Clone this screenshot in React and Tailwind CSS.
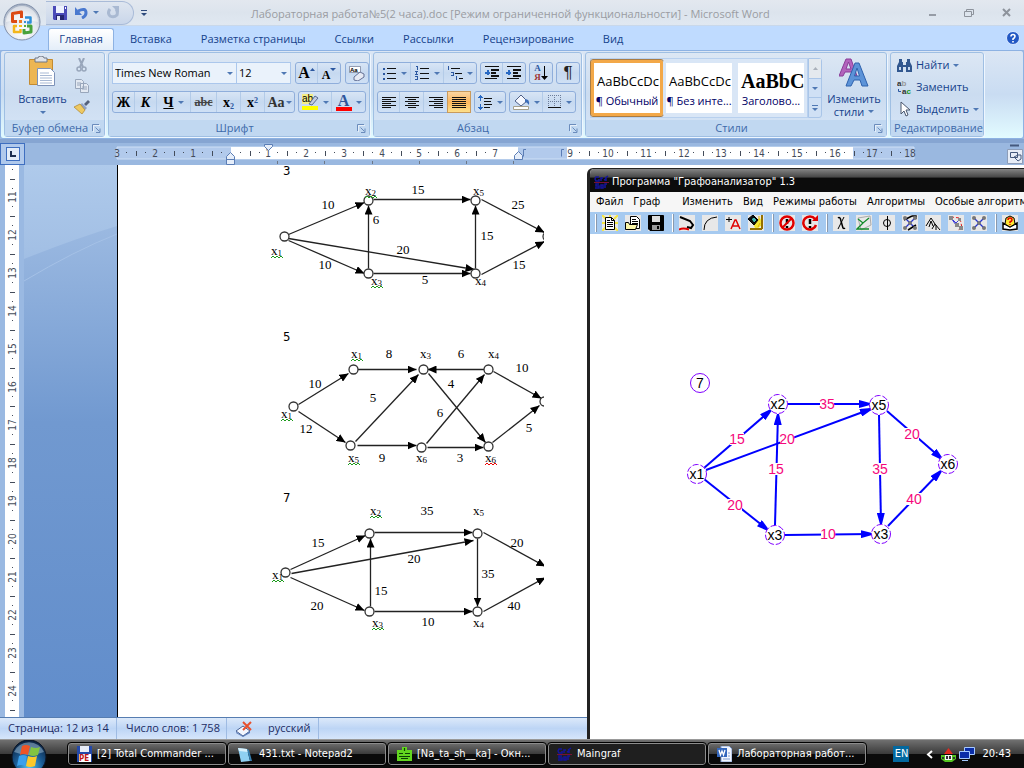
import { Fragment } from "react";

const TABS = ["Вставка", "Разметка страницы", "Ссылки", "Рассылки", "Рецензирование", "Вид"];

const TASKS = [
    {
        number: 3,
        viewBox: "271 177 273 154",
        height: "h-[154px]",
        nodes: [[284, 236], [368, 200], [475, 200], [368, 273], [475, 273], [547, 236]],
        edges: [
            [288, 234, 364, 202], [288, 238, 474, 269], [288, 240, 364, 273], [373, 199, 470, 199],
            [368, 268, 368, 205], [373, 273, 470, 273], [475, 268, 475, 205], [481, 199, 544, 232], [481, 274, 544, 241],
        ],
        names: [[271, 255, 1, "g"], [365, 195, 2, "g"], [473, 195, 5], [371, 285, 3, "g"], [475, 285, 4]],
        weights: [[328, 205, 10], [418, 190, 15], [376, 220, 6], [487, 236, 15], [518, 205, 25], [403, 250, 20], [325, 265, 10], [425, 280, 5], [519, 265, 15]],
    },
    {
        number: 5,
        viewBox: "271 343 273 149",
        height: "h-[149px]",
        nodes: [[293, 406], [353, 369], [423, 369], [488, 369], [350, 445], [421, 447], [488, 446], [544, 401]],
        edges: [
            [298, 404, 348, 373], [298, 411, 345, 442], [357, 369, 416, 369], [484, 369, 427, 369], [355, 441, 418, 374],
            [357, 445, 416, 445], [428, 373, 485, 442], [426, 443, 484, 374], [427, 447, 483, 447], [493, 371, 541, 398], [492, 442, 539, 405],
        ],
        names: [[351, 358, 1, "g"], [420, 358, 3], [488, 358, 4], [281, 418, 1, "g"], [348, 462, 5, "g"], [416, 462, 6], [485, 462, 6, "r"]],
        weights: [[389, 354, 8], [461, 354, 6], [522, 368, 10], [315, 384, 10], [373, 398, 5], [451, 384, 4], [306, 429, 12], [440, 413, 6], [382, 458, 9], [460, 458, 3], [529, 428, 5]],
    },
    {
        number: 7,
        viewBox: "271 504 273 130",
        height: "h-[130px]",
        nodes: [[285, 572], [369, 533], [477, 533], [369, 611], [477, 611]],
        edges: [
            [290, 569, 365, 535], [291, 573, 473, 540], [290, 577, 364, 610], [374, 532, 472, 532], [370, 606, 370, 538],
            [374, 611, 472, 611], [477, 538, 477, 606], [483, 532, 545, 566], [483, 611, 545, 577],
        ],
        names: [[370, 515, 2, "g"], [473, 515, 5], [272, 579, 1, "g"], [372, 627, 3, "g"], [473, 627, 4]],
        weights: [[427, 511, 35], [318, 543, 15], [414, 559, 20], [517, 543, 20], [488, 574, 35], [381, 591, 15], [317, 606, 20], [514, 606, 40], [428, 622, 10]],
    },
];

const GRAF_NODES = [[700, 383, "7"], [778, 404, "x2"], [879, 405, "x5"], [697, 474, "x1"], [775, 535, "x3"], [881, 534, "x3"], [948, 464, "x6"]];

const GRAF_EDGES = [
    [704, 468, 771, 410, 15, 737, 439],
    [706, 470, 871, 409, 20, 787, 439],
    [704, 479, 768, 530, 20, 735, 505],
    [775, 525, 778, 414, 15, 776, 469],
    [788, 404, 870, 404, 35, 827, 404],
    [879, 415, 881, 524, 35, 880, 469],
    [887, 411, 942, 459, 20, 912, 434],
    [785, 535, 872, 534, 10, 828, 534],
    [888, 526, 941, 471, 40, 914, 499],
];

function Caret({ className = "text-[#4f78b4]" }) {
    return (
        <svg className={ `shrink-0 w-[6px] h-[3px] ${ className }` } viewBox="0 0 6 3">
            <path d="M0 0h6L3 3z" fill="currentColor" />
        </svg>
    );
}

function Launcher() {
    return (
        <svg className="w-[9px] h-[9px]" viewBox="0 0 9 9" fill="none" stroke="#6b8cbc">
            <path d="M.5 7V.5H7M3.500 3.500l4 4M8 4.500v4H4" />
            <path d="M1.500 8V1.500H8" stroke="#fff" strokeOpacity=".6" />
        </svg>
    );
}

function RibbonGroup({ title, width, launcher, children }) {
    return (
        <section className={ `flex flex-col shrink-0 rounded-[3px] border border-[#9fbfe3] bg-linear-to-b from-[#dce7f4] via-[#cbdcf0] to-[#d6e5f7] shadow-[1px_1px_0_#eef6ff] ${ width }` }>
            <div className="flex-1 min-h-0">{ children }</div>
            <h2 className="flex h-4 items-center bg-[#c1d8f1] px-[3px] text-[11px] leading-4 text-[#3e6aaa]">
                <span className="flex-1 text-center whitespace-nowrap">{ title }</span>
                { launcher ? <button aria-label={ title }><Launcher /></button> : null }
            </h2>
        </section>
    );
}

function ButtonStrip({ children }) {
    return (
        <div className="flex h-[22px] rounded-[3px] border border-[#8faedb] bg-linear-to-b from-[#d8e5f5] via-[#c6d9f0] to-[#cfe0f5] divide-x divide-[#b3cbe8]">
            { children }
        </div>
    );
}

function Tool({ width = "w-[22px]", label, caret, active, children }) {
    return (
        <button
            aria-label={ label }
            className={ `flex h-full items-center justify-center gap-1 ${ width } ${ active ? "bg-linear-to-b from-[#fbd5a0] via-[#fbb65c] to-[#fde08a] outline outline-[#c99a5c]" : "" }` }
        >
            { children }
            { caret ? <Caret /> : null }
        </button>
    );
}

function Glyph({ d, stroke = "#111", extra }) {
    return (
        <svg className="shrink-0 w-4 h-4" viewBox="0 0 16 16" fill="none" stroke={ stroke } shapeRendering="crispEdges">
            <path d={ d } />
            { extra }
        </svg>
    );
}

function OfficeLogo() {
    return (
        <svg className="w-[38px] h-[38px]" viewBox="0 0 38 38">
            <defs>
                <radialGradient id="office" cx=".5" cy=".75" r=".7">
                    <stop offset="0" stopColor="#fff" />
                    <stop offset=".6" stopColor="#e3e7ee" />
                    <stop offset="1" stopColor="#a9b4c6" />
                </radialGradient>
            </defs>
            <circle cx="19" cy="19" r="18" fill="url(#office)" stroke="#8190aa" />
            <path d="M3 19a16 16 0 0 1 32 0q-16-5-32 0z" fill="#fff" opacity=".5" />
            <g fill="none" strokeLinejoin="round">
                <path d="M14 18.500h-4.500v-8l9-1.500v6" stroke="#dc4a14" strokeWidth="3" />
                <path d="M22 14.500h5.500v5H24" stroke="#2c8fd8" strokeWidth="2.500" />
                <path d="M14 23h-3v6h6.500v-3" stroke="#f3b61b" strokeWidth="2.500" />
                <path d="M21 26v4l7-1v-6h-4" stroke="#48a23c" strokeWidth="3" />
            </g>
            <path d="M16 17h3v3h-3z" fill="#ef7b20" />
            <path d="M21 18h2v2h-2z" fill="#3b8fd8" />
            <path d="M16 22h3v2h-3z" fill="#f4c01c" />
            <path d="M21 22h2v2h-2z" fill="#5bae3b" />
        </svg>
    );
}

function FloppyIcon({ className = "w-[14px] h-[14px]" }) {
    return (
        <svg className={ className } viewBox="0 0 14 14">
            <path d="M0 0h14v14H1l-1-1z" fill="#4a4ab8" />
            <path d="M3 0h8v7H3z" fill="#eef2ff" />
            <path d="M3 9h8v5H3z" fill="#25256f" />
            <path d="M4 10h3v4H4z" fill="#e4e8f8" />
            <path d="M12 1h1v2h-1z" fill="#fff" />
        </svg>
    );
}

function TitleBar() {
    return (
        <header className="flex h-[26px] shrink-0 items-center bg-linear-to-b from-[#e3e8ef] via-[#dce4ed] to-[#e0e8f1] border-b border-[#c9d8ea]">
            <div className="flex h-6 w-[88px] ml-[46px] items-center gap-2 rounded-r-full border-y border-r border-[#a9bbd8] bg-linear-to-b from-[#dfe6f0] to-[#c9d6ea] pl-[7px]">
                <button aria-label="Сохранить"><FloppyIcon /></button>
                <button aria-label="Отменить" className="flex items-center gap-[5px]">
                    <svg className="w-[13px] h-[13px]" viewBox="0 0 13 13" fill="none">
                        <path d="M3 5q8-4 8 2 0 3-4 5" stroke="#4a79cf" strokeWidth="3" />
                        <path d="M0 1v8h7z" fill="#4a79cf" />
                    </svg>
                    <Caret />
                </button>
                <button aria-label="Вернуть">
                    <svg className="w-3 h-[13px]" viewBox="0 0 12 13" fill="none">
                        <path d="M3 3q-3 4 0 7 4 2 7-1 1-3-1-6" stroke="#a9b9d2" strokeWidth="3" />
                        <path d="M5 0h7v7z" fill="#a9b9d2" />
                    </svg>
                </button>
            </div>
            <button aria-label="Настройка панели" className="ml-[7px] flex flex-col items-center gap-[2px]">
                <span className="h-px w-[6px] bg-[#2d4a7c]"></span>
                <Caret className="text-[#2d4a7c]" />
            </button>
            <h1 className="ml-[104px] flex-1 whitespace-nowrap pt-[2px] text-[11px] leading-5 text-[#9a9ca2]">
                Лабораторная работа№5(2 часа).doc [Режим ограниченной функциональности] - Microsoft Word
            </h1>
            <div className="flex items-center gap-7 pr-[13px] text-[#8d939c]">
                <button aria-label="Свернуть" className="mt-[5px] h-[2px] w-[7px] bg-[#969ca6]"></button>
                <button aria-label="Развернуть">
                    <svg className="w-[10px] h-2" viewBox="0 0 10 8" fill="none" stroke="currentColor">
                        <path d="M2.500 2V.5h7v5H8M.5 2.500h7v5h-7z" />
                    </svg>
                </button>
                <button aria-label="Закрыть">
                    <svg className="w-[9px] h-[9px]" viewBox="0 0 9 9" stroke="currentColor" strokeWidth="2">
                        <path d="M1 1l7 7M8 1L1 8" />
                    </svg>
                </button>
            </div>
        </header>
    );
}

function TabBar() {
    return (
        <nav className="flex h-6 shrink-0 items-center bg-[#bfdbff] text-[11px] text-[#15428b]">
            <button className="ml-[48px] mt-[2px] h-[22px] w-[66px] rounded-t-[3px] border-x border-t border-[#8db2e3] bg-linear-to-b from-white to-[#e4eef9]">Главная</button>
            <div className="ml-4 flex flex-1 gap-[29px] pt-[2px]">
                { TABS.map((tab) => <button key={ tab } className="whitespace-nowrap">{ tab }</button>) }
            </div>
            <button aria-label="Справка" className="mr-1">
                <svg className="w-[14px] h-[14px]" viewBox="0 0 14 14">
                    <circle cx="7" cy="7" r="6.500" fill="#2258c4" stroke="#dbe9ff" />
                    <path d="M5 5.500q0-2 2-2t2 1.700Q9 6.500 7 8v1M7 10v1.500" fill="none" stroke="#fff" strokeWidth="1.600" />
                </svg>
            </button>
        </nav>
    );
}

function ClipboardGroup() {
    return (
        <RibbonGroup title="Буфер обмена" width="w-[101px]" launcher>
            <div className="flex pl-3">
                <button className="mt-[3px] flex w-[51px] flex-col items-center text-[11px] leading-4 text-[#15428b]">
                    <svg className="w-[27px] h-8" viewBox="0 0 27 32">
                        <path d="M.5 3.500h23v25H.5z" fill="#edb653" stroke="#c38b32" />
                        <path d="M6 2h3q0-2 3-2t3 2h3v4H6z" fill="#dfe3ea" stroke="#6f7785" />
                        <path d="M8.500 12.500h13l4 4v13h-17z" fill="#fff" stroke="#7d92b8" />
                        <path d="M11 17h9M11 19.500h12M11 22h12M11 24.500h12M11 27h12" stroke="#a8b9d4" />
                    </svg>
                    <span className="mt-[3px]">Вставить</span>
                    <span className="mt-1"><Caret /></span>
                </button>
                <div className="mt-[5px] ml-[6px] flex flex-col gap-[7px]">
                    <button aria-label="Вырезать">
                        <svg className="block w-4 h-[14px]" viewBox="0 0 16 14" fill="none" stroke="#98a6bb" strokeWidth="1.500">
                            <path d="M5 0l4 9M10 0L6 9" strokeWidth="2" />
                            <circle cx="5" cy="11" r="2" />
                            <circle cx="10" cy="11" r="2" />
                        </svg>
                    </button>
                    <button aria-label="Копировать">
                        <svg className="block w-4 h-[14px]" viewBox="0 0 16 14" fill="#e3e9f2" stroke="#98a6bb">
                            <path d="M1.500 .5h6l2 2v7h-8zM6.500 4.500h6l2 2v7h-8z" />
                            <path d="M3 4h4M3 6h3M8 8h5M8 10h5" />
                        </svg>
                    </button>
                    <button aria-label="Формат по образцу">
                        <svg className="block w-4 h-[14px]" viewBox="0 0 16 14">
                            <path d="M10 4l4-4 2 2-4 4z" fill="#55617c" />
                            <path d="M8 3l5 5-2 2-5-5z" fill="#8fa2c8" />
                            <path d="M6 4l5 6-3 4-8-7z" fill="#eec963" stroke="#af8429" strokeWidth=".7" />
                        </svg>
                    </button>
                </div>
            </div>
        </RibbonGroup>
    );
}

function FontGroup() {
    return (
        <RibbonGroup title="Шрифт" width="w-[262px]" launcher>
            <div className="flex flex-col gap-[7px] px-[3px] pt-[9px] text-black">
                <div className="flex gap-1">
                    <div className="flex h-[22px] text-[11px]">
                        <label className="relative flex items-center">
                            <select aria-label="Шрифт" className="h-full w-[125px] appearance-none border border-[#abc7ec] bg-[#eaf2fb] px-[2px]"><option>Times New Roman</option></select>
                            <span className="pointer-events-none absolute right-1 flex"><Caret /></span>
                        </label>
                        <label className="relative flex items-center">
                            <select aria-label="Размер" className="h-full w-[54px] appearance-none border border-l-0 border-[#abc7ec] bg-[#eaf2fb] px-[2px]"><option>12</option></select>
                            <span className="pointer-events-none absolute right-1 flex"><Caret /></span>
                        </label>
                    </div>
                    <ButtonStrip>
                        <Tool label="Увеличить размер">
                            <span className="font-['Liberation_Serif',serif] text-[16px] font-bold">A</span>
                            <svg className="-ml-1 mb-2 w-[5px] h-[3px]" viewBox="0 0 5 3"><path d="M0 3h5L2.500 0z" fill="#2b57a0" /></svg>
                        </Tool>
                        <Tool label="Уменьшить размер">
                            <span className="pt-1 font-['Liberation_Serif',serif] text-[12px] font-bold">A</span>
                            <span className="-ml-1 mb-2 flex"><Caret className="text-[#2b57a0]" /></span>
                        </Tool>
                    </ButtonStrip>
                    <ButtonStrip>
                        <Tool label="Очистить формат">
                            <svg className="w-4 h-4" viewBox="0 0 16 16">
                                <path d="M.5 1.500h11v6H.5z" fill="#fff" stroke="#5a6784" strokeWidth=".6" />
                                <text x="1" y="7" fontSize="6" fontFamily="Liberation Sans, sans-serif" fontWeight="bold">Aa</text>
                                <path d="M5 12l6-5 4 2v3l-6 4-4-1z" fill="#e6eaf4" stroke="#647095" />
                            </svg>
                        </Tool>
                    </ButtonStrip>
                </div>
                <div className="flex gap-[3px] font-['Liberation_Serif',serif] text-[14px]">
                    <ButtonStrip>
                        <Tool><b>Ж</b></Tool>
                        <Tool><b><i>К</i></b></Tool>
                        <Tool width="w-[34px]" caret><b><u>Ч</u></b></Tool>
                        <Tool width="w-[26px]"><s className="text-[12px] font-bold text-[#444]">abc</s></Tool>
                        <Tool width="w-6"><span className="font-bold">x<sub className="text-[8px] text-[#2b57a0]">2</sub></span></Tool>
                        <Tool width="w-6"><span className="font-bold">x<sup className="text-[8px] text-[#2b57a0]">2</sup></span></Tool>
                        <Tool width="w-[29px]" caret><span className="-mr-[3px] font-bold text-[#333]">Aa</span></Tool>
                    </ButtonStrip>
                    <ButtonStrip>
                        <Tool width="w-[33px]" label="Цвет выделения" caret>
                            <svg className="w-[17px] h-4" viewBox="0 0 17 16">
                                <path d="M0 0h11v10H0z" fill="#f4ee86" />
                                <text x="0" y="8" fontSize="10" fontFamily="Liberation Sans, sans-serif">ab</text>
                                <path d="M7 10l6-8 3 2-6 7z" fill="#c3cde2" stroke="#596b92" />
                                <path d="M0 12h16v4H0z" fill="#ff0" />
                            </svg>
                        </Tool>
                        <Tool width="w-[33px]" label="Цвет текста" caret>
                            <span className="flex flex-col items-center text-[16px] leading-[13px] font-bold text-[#2f569c]">
                                A
                                <span className="h-1 w-4 bg-[#f00]"></span>
                            </span>
                        </Tool>
                    </ButtonStrip>
                </div>
            </div>
        </RibbonGroup>
    );
}

function ParagraphGroup() {
    return (
        <RibbonGroup title="Абзац" width="w-[209px]" launcher>
            <div className="flex flex-col gap-[7px] px-[3px] pt-[9px]">
                <div className="flex gap-[3px]">
                    <ButtonStrip>
                        <Tool width="w-[33px]" label="Маркеры" caret>
                            <Glyph d="M6 3.500h9M6 8.500h9M6 13.500h9" extra={ <path d="M2 3.500h2M2 8.500h2M2 13.500h2" stroke="#2b57a0" strokeWidth="2" /> } />
                        </Tool>
                        <Tool width="w-[33px]" label="Нумерация" caret>
                            <Glyph d="M6 3.500h9M6 8.500h9M6 13.500h9" extra={ <path d="M2 1.500h1.500v3M1 6.500h2.500L1.500 9.500h2M1 11.500h2.500v3H1" stroke="#2b57a0" /> } />
                        </Tool>
                        <Tool width="w-[32px]" label="Многоуровневый список" caret>
                            <Glyph d="M4 3.500h9M8 8.500h7M12 13.500h4" extra={ <path d="M1.500 1v4M4 7.500h2v3H4v-1M9.500 11v4" stroke="#2b57a0" /> } />
                        </Tool>
                    </ButtonStrip>
                    <ButtonStrip>
                        <Tool label="Уменьшить отступ">
                            <Glyph d="M1 1.500h14M1 13.500h12" extra={ <><path d="M7 4.500h8M7 7.500h5M7 10.500h8" stroke="#111" strokeWidth="2" /><path d="M6 7.500H1M3.500 5v5" stroke="#2869c4" strokeWidth="2" /></> } />
                        </Tool>
                        <Tool label="Увеличить отступ">
                            <Glyph d="M1 1.500h14M1 13.500h12" extra={ <><path d="M7 4.500h8M7 7.500h5M7 10.500h8" stroke="#111" strokeWidth="2" /><path d="M0 7.500h5M3 5v5" stroke="#2869c4" strokeWidth="2" /></> } />
                        </Tool>
                    </ButtonStrip>
                    <ButtonStrip>
                        <Tool label="Сортировка">
                            <span className="flex flex-col font-['Liberation_Serif',serif] text-[9px] leading-[9px] font-bold text-[#2b57a0]">А<span className="text-[#a03434]">Я</span></span>
                            <svg className="-ml-1 w-[7px] h-[14px]" viewBox="0 0 7 14"><path d="M3 0h1v10h3l-3.500 4L0 10h3z" /></svg>
                        </Tool>
                    </ButtonStrip>
                    <ButtonStrip><Tool><span className="font-['Liberation_Sans',sans-serif] text-[17px] text-[#222]">¶</span></Tool></ButtonStrip>
                </div>
                <div className="flex gap-[3px]">
                    <ButtonStrip>
                        <Tool label="По левому краю"><Glyph d="M1 3.500h14M1 5.500h9M1 7.500h14M1 9.500h9M1 11.500h14M1 13.500h9" /></Tool>
                        <Tool width="w-6" label="По центру"><Glyph d="M1 3.500h14M4 5.500h8M1 7.500h14M4 9.500h8M1 11.500h14M4 13.500h8" /></Tool>
                        <Tool width="w-6" label="По правому краю"><Glyph d="M1 3.500h14M6 5.500h9M1 7.500h14M6 9.500h9M1 11.500h14M6 13.500h9" /></Tool>
                        <Tool label="По ширине" active><Glyph d="M1 3.500h14M1 5.500h14M1 7.500h14M1 9.500h14M1 11.500h14M1 13.500h14" /></Tool>
                    </ButtonStrip>
                    <ButtonStrip>
                        <Tool width="w-[30px]" label="Интервал" caret>
                            <Glyph d="M7 4.500h8M7 7.500h7M7 10.500h8M7 13.500h6" extra={ <path d="M3.500 1v6M3.500 10v6M1 3.500h5M1 13.500h5M2 2.500h3M2 14.500h3" stroke="#2869c4" /> } />
                        </Tool>
                    </ButtonStrip>
                    <ButtonStrip>
                        <Tool width="w-[33px]" label="Заливка" caret>
                            <svg className="w-[17px] h-4" viewBox="0 0 17 16">
                                <path d="M8 1l6 6-6 5-6-5z" fill="#f5f8ff" stroke="#4e5f86" />
                                <path d="M12 5q5 0 4 6-2-3-4-3z" fill="#3c6db8" />
                                <path d="M.5 12.500h15v3H.5z" fill="#fff" stroke="#a5a08c" />
                            </svg>
                        </Tool>
                        <Tool width="w-[32px]" label="Границы" caret>
                            <Glyph d="M2 13.500h13" extra={ <path d="M2 1.500h13M2 7.500h13M2.500 1v12M8.500 1v12M14.500 1v12" stroke="#6d7e9c" strokeDasharray="1 1" /> } />
                        </Tool>
                    </ButtonStrip>
                </div>
            </div>
        </RibbonGroup>
    );
}

function StyleCard({ sample, name, sampleClass = "text-[13px]", active }) {
    return (
        <button className={ `flex h-[56px] w-[72px] flex-col items-center overflow-hidden rounded-[2px] border-3 bg-white py-1 whitespace-nowrap ${ active ? "border-[#f3a848] outline outline-[#a87b44]" : "border-[#d9e6f6]" }` }>
            <span className={ `h-7 w-full overflow-hidden pl-[3px] text-left leading-7 text-black ${ sampleClass }` }>{ sample }</span>
            <span className="text-[11px] leading-4 text-[#000066]">{ name }</span>
        </button>
    );
}

function StylesGroup() {
    return (
        <RibbonGroup title="Стили" width="w-[302px]" launcher>
            <div className="flex pt-[5px] pl-[4px]">
                <div className="flex items-center border border-[#b8d0ee] bg-[#d9e6f6] h-[60px]">
                    <StyleCard sample="AaBbCcDc" name="¶ Обычный" active />
                    <StyleCard sample="AaBbCcDc" name="¶ Без инте..." />
                    <StyleCard sample="AaBbC" name="Заголово..." sampleClass="font-['Liberation_Serif',serif] text-[20px] font-bold" />
                </div>
                <div className="flex w-[14px] flex-col divide-y divide-[#a9c5e8] rounded-r-[3px] border border-[#a9c5e8] bg-[#cfe0f5]">
                    <button aria-label="Вверх" className="flex flex-1 items-center justify-center bg-[#e4e9ee]">
                        <svg className="w-[5px] h-[3px]" viewBox="0 0 5 3"><path d="M0 3h5L2.500 0z" fill="#a9b0ba" /></svg>
                    </button>
                    <button aria-label="Вниз" className="flex flex-1 items-center justify-center"><Caret /></button>
                    <button aria-label="Все стили" className="flex flex-1 flex-col items-center justify-center gap-[2px]">
                        <span className="h-px w-[6px] bg-[#4f78b4]"></span>
                        <Caret />
                    </button>
                </div>
                <button className="flex flex-1 flex-col items-center text-[11px] leading-[13px] text-[#15428b]">
                    <svg className="w-[30px] h-[30px]" viewBox="0 0 30 30" strokeWidth="1">
                        <path d="M0 18L7 1h5l6 17h-4l-1-4H6l-2 4zM7 11h5L9.500 4z" fill="#b264bd" stroke="#8a3d98" />
                        <path d="M7 28L16 5h4l9 23h-6l-2-6h-6l-3 6zM15.500 18h5L18 10z" fill="#5c93d8" stroke="#2f62ad" />
                    </svg>
                    <span className="mt-1">Изменить</span>
                    <span className="flex items-center gap-1">стили <Caret /></span>
                </button>
            </div>
        </RibbonGroup>
    );
}

function EditingGroup() {
    return (
        <RibbonGroup title="Редактирование" width="w-[94px]">
            <div className="flex flex-col gap-[2px] pt-[2px] pl-[6px] text-[11px] text-[#15428b]">
                <button className="flex h-5 items-center gap-1">
                    <svg className="w-[15px] h-[13px]" viewBox="0 0 15 13" fill="#31578f">
                        <path d="M2 0h3v3h1v3h3V3h1V0h3v3l2 4v6H9V8H6v5H0V7l2-4z" />
                        <path d="M2 8h2v3H2zM11 8h2v3h-2z" fill="#c8daf2" />
                    </svg>
                    Найти <Caret />
                </button>
                <button className="flex h-5 items-center gap-1">
                    <svg className="w-[15px] h-4" viewBox="0 0 15 16" fontFamily="Liberation Sans, sans-serif" fontSize="8" fontWeight="bold">
                        <text x="0" y="7" fill="#333">a<tspan fill="#999">b</tspan></text>
                        <text x="5" y="15" fill="#333">a<tspan fill="#14961c">c</tspan></text>
                        <path d="M1.500 10v2.500H4" fill="none" stroke="#2b57a0" />
                    </svg>
                    Заменить
                </button>
                <button className="flex h-5 items-center gap-1">
                    <svg className="w-[15px] h-4" viewBox="0 0 15 16" fill="#fff" stroke="#49566d">
                        <path d="M4 1v12l3-3 2 5 2-1-2-5h4z" />
                    </svg>
                    Выделить <Caret />
                </button>
            </div>
        </RibbonGroup>
    );
}

function HorizontalRuler() {
    const marks = Array.from({ length: 22 }, (_, i) => i - 3);
    return (
        <div className="flex h-[22px] shrink-0 bg-[#9ab8e0]">
            <button aria-label="Табуляция" className="flex w-[25px] items-center justify-center border border-[#3f6fc0] bg-[#b0c9ec]">
                <span className="flex h-[14px] w-[14px] items-center justify-center border border-[#3f6fc0] bg-[#e3ecf8]">
                    <span className="h-[6px] w-[6px] border-b-2 border-l-2 border-[#1c2e50]"></span>
                </span>
            </button>
            <svg className="w-[960px] h-[22px]" viewBox="25 143 960 22">
                <path d="M117 147h797v12H117z" fill="#b2caec" stroke="#cfe0f6" />
                <path d="M231 147h287v12H231zM567 147h286v12H567z" fill="#fff" />
                <g fontFamily="DejaVu Sans Condensed, sans-serif" fontSize="10" fill="#444c5a" textAnchor="middle">
                    { marks.map((n) => {
                        const x = Math.round(230.5 + n * 37.75);
                        const covered = n === 8;
                        return (
                            <Fragment key={ n }>
                                { n !== 0 && !covered ? <text x={ x } y="157">{ Math.abs(n) }</text> : null }
                                { n < 18 && !covered && n !== 7 ? (
                                    <path d={ `M${ x + 9 } 152h1v1h-1zM${ x + 19 } 151h1v5h-1zM${ x + 28 } 152h1v1h-1z` } />
                                ) : null }
                            </Fragment>
                        );
                    }) }
                </g>
                <path d="M277.500 161v3M324.500 161v3M372.500 161v3M419.500 161v3M466.500 161v3M513.500 161v3" stroke="#6d7786" />
                <g fill="#e6eefa" stroke="#5b7db5">
                    <path d="M226.500 164.500v-8l4-4 4 4v8zM226.500 159.500h8" />
                    <path d="M264.500 144.500h8v2l-4 4-4-4z" />
                    <path d="M514.500 159.500v-4l4-4 4 4v4z" />
                    <path d="M526 149.500h-2.500v7M564 149.500h-2.500v7" fill="none" />
                </g>
            </svg>
            <button aria-label="Линейка" className="ml-auto mr-px flex w-4 items-center">
                <svg className="w-4 h-5" viewBox="0 0 16 20" fill="none" stroke="#45597d">
                    <path d="M3 1.500h9" strokeWidth="2" />
                    <path d="M.5 5.500h15v14H.5z" fill="#e7edf7" stroke="#8d9db8" />
                    <path d="M3.500 8.500h7v5h-7zM7 13l4 4 3-2v-4h-3z" />
                </svg>
            </button>
        </div>
    );
}

function VerticalRuler() {
    return (
        <svg className="w-6 h-[552px] shrink-0" viewBox="0 165 24 552">
            <path d="M0 165h24v552H0z" fill="#9ab9e2" />
            <path d="M5 165h14v552H5z" fill="#fff" />
            <g fill="#444c5a" fontFamily="DejaVu Sans Condensed, sans-serif" fontSize="10" textAnchor="middle">
                <path d="M12 169h1v1h-1zM10 179h5v1h-5zM12 188h1v1h-1z" />
                { Array.from({ length: 14 }, (_, i) => {
                    const y = 197 + i * 38;
                    return (
                        <Fragment key={ i }>
                            <text transform={ `translate(16 ${ y }) rotate(-90)` }>{ 11 + i }</text>
                            <path d={ `M12 ${ y + 9 }h1v1h-1zM10 ${ y + 19 }h5v1h-5zM12 ${ y + 28 }h1v1h-1z` } />
                        </Fragment>
                    );
                }) }
            </g>
        </svg>
    );
}

function TaskGraph({ task }) {
    const marker = `arrow${ task.number }`;
    return (
        <figure>
            <figcaption className="pl-3 font-['DejaVu_Sans_Condensed','DejaVu_Sans',sans-serif] text-[13px] leading-3">{ task.number }</figcaption>
            <svg className={ `block w-[273px] ${ task.height }` } viewBox={ task.viewBox } fontFamily="Liberation Serif, serif" fontSize="13">
                <defs>
                    <marker id={ marker } markerUnits="userSpaceOnUse" markerWidth="10" markerHeight="8" refX="9" refY="4" orient="auto">
                        <path d="M0 0l9 4-9 4z" />
                    </marker>
                </defs>
                { task.edges.map(([x1, y1, x2, y2]) => (
                    <line key={ `${ x1 }-${ y1 }-${ x2 }` } x1={ x1 + 0.5 } y1={ y1 + 0.5 } x2={ x2 + 0.5 } y2={ y2 + 0.5 } stroke="#222" strokeWidth="1.300" markerEnd={ `url(#${ marker })` } />
                )) }
                { task.nodes.map(([x, y]) => <circle key={ `${ x }-${ y }` } cx={ x + 0.5 } cy={ y + 0.5 } r="4.500" fill="#fff" stroke="#333" strokeWidth="1.300" />) }
                { task.weights.map(([x, y, value]) => <text key={ `${ x }-${ y }` } x={ x } y={ y + 4 } textAnchor="middle">{ value }</text>) }
                { task.names.map(([x, y, index, mark]) => (
                    <g key={ `${ x }-${ y }` }>
                        <text x={ x } y={ y }>x<tspan fontSize="9" dy="1">{ index }</tspan></text>
                        { mark ? <path d={ `M${ x } ${ y + 3 }l2-2 2 2 2-2 2 2 2-2 2 2` } fill="none" stroke={ mark === "r" ? "#e00" : "#1a9a1a" } /> : null }
                    </g>
                )) }
            </svg>
        </figure>
    );
}

function DocumentArea() {
    return (
        <main className="flex flex-1 min-h-0 overflow-hidden">
            <VerticalRuler />
            <svg className="h-full w-[93px] shrink-0" viewBox="24 165 93 552" preserveAspectRatio="none">
                <defs>
                    <linearGradient id="desk" x2="0" y2="1">
                        <stop offset="0" stopColor="#afcaeb" />
                        <stop offset=".15" stopColor="#a3c0e5" />
                        <stop offset=".6" stopColor="#6b97d2" />
                        <stop offset="1" stopColor="#618dcb" />
                    </linearGradient>
                    <linearGradient id="wave" x2="0" y2="1">
                        <stop offset="0" stopColor="#9bb9e1" />
                        <stop offset=".4" stopColor="#7199d0" />
                        <stop offset="1" stopColor="#618dcb" />
                    </linearGradient>
                </defs>
                <path d="M24 165h93v552H24z" fill="url(#desk)" />
                <path d="M24 259q50-20 93-33v491H24z" fill="url(#wave)" />
                <path d="M24 281q50-30 93-47" fill="none" stroke="#a5c1e6" />
            </svg>
            <div className="flex-1 border-l border-black bg-white pl-[153px]">
                { TASKS.map((task) => <TaskGraph key={ task.number } task={ task } />) }
            </div>
        </main>
    );
}

function StatusBar() {
    return (
        <footer className="flex h-[22px] shrink-0 items-center border-t border-[#567db1] bg-linear-to-b from-[#dce9fa] via-[#bdd5f5] to-[#d6e6fb] text-[11px] text-[#1c2b63]">
            <span className="flex h-full w-[117px] items-center border-r border-[#9ebbe3] pl-2">Страница: 12 из 14</span>
            <span className="flex h-full w-[110px] items-center border-r border-[#9ebbe3] pl-[9px]">Число слов: 1 758</span>
            <span className="flex h-full w-[92px] items-center gap-4 border-r border-[#9ebbe3] pl-2">
                <svg className="w-[17px] h-4" viewBox="0 0 17 16">
                    <path d="M1 10l7-5 7 5-7 5z" fill="#f3f7ff" stroke="#4a6395" />
                    <path d="M1 11l7 4 7-5v2l-7 4-7-4z" fill="#5d7db8" />
                    <path d="M8 1l8 8M16 1L8 9" stroke="#e8502e" strokeWidth="2" />
                </svg>
                русский
            </span>
        </footer>
    );
}

function GrafLogo() {
    return (
        <svg className="w-[15px] h-[15px] shrink-0" viewBox="0 0 15 15" fill="none" stroke="#14149c" strokeWidth="1.500">
            <path d="M5 2H2L1 4l1 2h3V4M7 6V3h2M10 5l2-1v2M11 3l3-2M5 9H2v2h3v2H1M7 10h2v3H7zM11 13V9h2" />
            <path d="M0 7.500h15" stroke="#761233" strokeWidth="1" />
        </svg>
    );
}

function GrafIcon({ label, children, bg = "bg-[#e8e8e8]" }) {
    return (
        <button aria-label={ label } className={ `mr-[7px] h-4 w-4 shrink-0 ${ bg }` }>
            <svg className="block w-4 h-4" viewBox="0 0 16 16" fill="none" stroke="#000">{ children }</svg>
        </button>
    );
}

function Gripper() {
    return <span className="mr-[5px] ml-[1px] h-[18px] w-[2px] shrink-0 border-l border-white bg-[#8a99ad]"></span>;
}

const crossDots = [[3, 3], [13, 3], [3, 13], [13, 13], [8, 8]];

function DotGraph({ color = "#2230d0", extra }) {
    return (
        <>
            <path d="M3 3l10 10M13 3L3 13" stroke={ color } strokeWidth="1.300" />
            { extra }
            { crossDots.map(([x, y]) => <circle key={ `${ x }${ y }` } cx={ x } cy={ y } r="2" fill="#777" stroke="none" />) }
        </>
    );
}

function GrafToolbar() {
    return (
        <div className="flex h-[22px] shrink-0 items-center overflow-hidden bg-[#a6caf0] pl-1">
            <Gripper />
            <GrafIcon label="Новый">
                <path d="M0 0l4 4M8 0v2M16 0l-4 4M0 8h3M16 8h-3M0 16l4-4M16 16l-4-4" stroke="#f5e642" strokeWidth="2" />
                <path d="M3.500 2.500h6l3 3v9h-9z" fill="#fff" />
                <path d="M9.500 2.500v3h3M5 5.500h3M5 7.500h6M5 9.500h6M5 11.500h6" />
            </GrafIcon>
            <GrafIcon label="Открыть">
                <path d="M5.500 9V1.500h6l3 3v9H3" fill="#fff" />
                <path d="M7 4.500h4M7 6.500h6M7 8.500h6" />
                <path d="M.5 7.500h3l1 2h8l-2 5H.5z" fill="#fbf6a8" />
            </GrafIcon>
            <GrafIcon label="Сохранить">
                <path d="M.5 .5h15v15H2l-1.500-1.500z" fill="#000" />
                <path d="M4 1h8v6H4z" fill="#ddd" stroke="none" />
                <path d="M4 10h8v5H4z" fill="#999" stroke="none" />
                <path d="M9 11h2v3H9z" fill="#000" stroke="none" />
            </GrafIcon>
            <Gripper />
            <GrafIcon label="Вершина">
                <path d="M1 2l10 4 3 4-2 3-4-1" strokeWidth="2" />
                <path d="M0 14.500q4-2 10 0" stroke="#e00000" strokeWidth="2" />
            </GrafIcon>
            <GrafIcon label="Дуга"><path d="M2 15Q2 3 15 2" /></GrafIcon>
            <GrafIcon label="Текст">
                <path d="M1 4.500h6M4 2v5" />
                <path d="M6 14l4-9h1l4 9M8 11h6" stroke="#e00000" strokeWidth="1.500" />
            </GrafIcon>
            <GrafIcon label="Удалить">
                <path d="M4 7l8-4 3 6-7 6z" fill="#f3e534" stroke="none" />
                <path d="M0 4l5-4 5 5-4 5z" fill="#111" />
                <path d="M3 4l3-2 3 3-3 3z" fill="#46b6b0" />
                <path d="M14 0v14M2 14h12" stroke="#947000" strokeWidth="2" />
                <path d="M11 1v4M12 8l-2 4" stroke="#e0b000" />
            </GrafIcon>
            <Gripper />
            <GrafIcon label="Стоп">
                <circle cx="8" cy="8" r="6.500" stroke="#e00000" strokeWidth="2.500" />
                <path d="M8 4v5M8 11v2" strokeWidth="2.500" />
                <path d="M12.500 3.500l-9 9" stroke="#e00000" strokeWidth="2" />
            </GrafIcon>
            <GrafIcon label="Повторить">
                <path d="M13 4a6.500 6.500 0 1 0 1 6" stroke="#e00000" strokeWidth="2.500" />
                <path d="M10 6h6V0z" fill="#e00000" stroke="none" />
                <path d="M8 4v5M8 11v2" strokeWidth="2.500" />
            </GrafIcon>
            <Gripper />
            <GrafIcon label="Хроматическое число">
                <path d="M5 3q2-2 3 3l2 7q1 1 2 0" strokeWidth="1.500" />
                <path d="M11 2L5 14" />
            </GrafIcon>
            <GrafIcon label="Контур">
                <path d="M2 3l12-2 1 9-10 5z" stroke="#aaa" />
                <path d="M2 4l5 4 6-5M7 8l-6 6h12" stroke="#128a2a" strokeWidth="1.300" />
            </GrafIcon>
            <GrafIcon label="Пустые подграфы">
                <circle cx="8" cy="8" r="3.500" />
                <path d="M8.500 1v14" />
            </GrafIcon>
            <GrafIcon label="Путь"><DotGraph extra={ <path d="M2 5l8-4M6 15l8-5M10 1h4v3" strokeWidth="1.500" /> } /></GrafIcon>
            <GrafIcon label="Дерево">
                <path d="M1 11l5-8 4 6 5 6M6 6l-2 6M6 6l2 5M10 9l-3 5M11 10v5" />
            </GrafIcon>
            <GrafIcon label="Кратчайший путь">
                <path d="M3 3l10 10M3 3l5 7M13 3L8 8" stroke="#3a3ad8" />
                <path d="M3 2l9 1 2 10-4 2" stroke="#e02020" strokeDasharray="3 2" />
                <path d="M1 1h4v4H1zM10 3h3v3h-3zM7 8h4v4H7zM11 11h4v4h-4z" fill="#888" stroke="none" />
            </GrafIcon>
            <GrafIcon label="Связность"><DotGraph /></GrafIcon>
            <Gripper />
            <GrafIcon label="Справка">
                <path d="M1 14V8l7 4 7-4v6l-7 1z" fill="#fff" strokeWidth="1.500" />
                <path d="M3 9l1-6 4-2 4 2 1 6-5 3z" fill="#ffe733" />
                <path d="M6 5q0-2 2-2t2 2q0 1-2 2v1M8 9v1" stroke="#e00000" strokeWidth="1.500" />
            </GrafIcon>
        </div>
    );
}

function GrafCanvas() {
    return (
        <div className="flex-1 overflow-hidden bg-white pt-[126px] pl-20">
            <svg className="block w-[300px] h-[200px]" viewBox="670 360 300 200" fontFamily="Liberation Sans, sans-serif" fontSize="14" textAnchor="middle">
                <defs>
                    <marker id="blueArrow" markerUnits="userSpaceOnUse" markerWidth="12" markerHeight="8" refX="11" refY="4" orient="auto">
                        <path d="M0 0l11 3v2l-11 3z" fill="#00f" />
                    </marker>
                </defs>
                { GRAF_EDGES.map(([x1, y1, x2, y2]) => (
                    <line key={ `${ x1 }-${ y1 }` } x1={ x1 } y1={ y1 } x2={ x2 } y2={ y2 } stroke="#00f" strokeWidth="2" markerEnd="url(#blueArrow)" />
                )) }
                { GRAF_EDGES.map(([x1, y1, , , weight, x, y]) => (
                    <g key={ `${ x1 }-${ y1 }` }>
                        <rect x={ x - 7 } y={ y - 6 } width="14" height="12" fill="#fff" />
                        <text x={ x } y={ y + 5 } fill="#f5087c">{ weight }</text>
                    </g>
                )) }
                { GRAF_NODES.map(([x, y, name]) => (
                    <g key={ `${ x }-${ y }` }>
                        <circle cx={ x } cy={ y } r="9.500" fill="#fff" stroke="#8000ff" strokeDasharray={ name === "7" ? "none" : "6 2" } />
                        <text x={ x } y={ y + 5 }>{ name }</text>
                    </g>
                )) }
            </svg>
        </div>
    );
}

function GrafWindow() {
    return (
        <section className="absolute top-[168px] right-0 bottom-[29px] left-[587px] flex flex-col overflow-hidden rounded-tl-[6px] border-t border-l-3 border-[#222] bg-white font-['DejaVu_Sans_Condensed','DejaVu_Sans',sans-serif] text-[11px]">
            <h2 className="flex h-[23px] shrink-0 items-center gap-[3px] bg-linear-to-b from-[#858585] from-0% via-[#484848] via-35% to-[#0c0c0c] to-40% pt-[3px] pl-1 text-white whitespace-nowrap">
                <GrafLogo />
                Программа "Графоанализатор" 1.3
            </h2>
            <nav className="flex h-5 shrink-0 items-center gap-[10px] overflow-hidden bg-[#f6f6f6] pl-[6px] whitespace-nowrap">
                <button>Файл</button>
                <button>Граф</button>
                <button className="ml-3">Изменить</button>
                <button>Вид</button>
                <button>Режимы работы</button>
                <button>Алгоритмы</button>
                <button>Особые алгоритмы</button>
            </nav>
            <GrafToolbar />
            <GrafCanvas />
        </section>
    );
}

function TaskButton({ icon, active, children }) {
    return (
        <button className={ `flex h-[22px] w-[158px] shrink items-center gap-[5px] overflow-hidden rounded-[3px] border border-[#8c8c8c] pl-2 whitespace-nowrap outline outline-black ${ active ? "bg-[#1f1f1f]" : "bg-linear-to-b from-[#6a6a6a] from-0% via-[#3b3b3b] via-50% to-[#0a0a0a] to-50%" }` }>
            { icon }
            { children }
        </button>
    );
}

function Taskbar() {
    return (
        <footer className="flex h-[29px] shrink-0 items-center gap-[2px] overflow-hidden border-t border-[#999] bg-linear-to-b from-[#707070] from-0% via-[#3a3a3a] via-50% to-[#0b0b0b] to-50% font-['DejaVu_Sans_Condensed','DejaVu_Sans',sans-serif] text-[11px] text-white">
            <button aria-label="Пуск" className="mr-[19px] ml-[11px] h-[29px] w-[36px] shrink-0">
                <svg className="block w-[36px] h-[36px]" viewBox="0 0 36 36">
                    <defs>
                        <radialGradient id="orb" cx=".5" cy=".8" r=".8">
                            <stop offset="0" stopColor="#4ec4f3" />
                            <stop offset=".5" stopColor="#1b5c95" />
                            <stop offset="1" stopColor="#0a1d38" />
                        </radialGradient>
                    </defs>
                    <circle cx="18" cy="17" r="17" fill="url(#orb)" stroke="#0b1424" />
                    <path d="M3 12a16 15 0 0 1 30 0q-15 6-30 0z" fill="#b9d4e8" opacity=".45" />
                    <path d="M11 6q4-2 8 0l-2 9q-4-2-8 0z" fill="#ee5425" />
                    <path d="M20 7q5 2 9 0l-2 8q-5 2-9 0z" fill="#83c441" />
                    <path d="M8 16q4-2 8 0l-2 10q-4-2-8 0z" fill="#3ba0ec" />
                    <path d="M17 16q5 2 9 0l-2 10q-5 2-9 0z" fill="#fdc92a" />
                </svg>
            </button>
            <TaskButton
                icon={
                    <svg className="w-[15px] h-4 shrink-0" viewBox="0 0 15 16">
                        <path d="M0 0h15v16H0z" fill="#2348a8" />
                        <path d="M3 0h9v6H3z" fill="#e8edf8" />
                        <path d="M2 8h12v8H2z" fill="#fff" />
                        <text x="2" y="15" fontSize="8" fontWeight="bold" fill="#c11616">PE</text>
                    </svg>
                }
            >
                [2] Total Commander ...
            </TaskButton>
            <TaskButton
                icon={
                    <svg className="w-[15px] h-[15px] shrink-0 mr-[2px]" viewBox="0 0 15 15">
                        <path d="M1 1l9 1 3 12-9 1z" fill="#8fd0f2" />
                        <path d="M1 1l9 1 1 3-9-1z" fill="#d8f0fb" />
                        <path d="M10 2l3 12h2L12 3z" fill="#367fb0" />
                    </svg>
                }
            >
                431.txt - Notepad2
            </TaskButton>
            <TaskButton
                icon={
                    <svg className="w-[15px] h-[14px] shrink-0" viewBox="0 0 15 14">
                        <path d="M5 0h5v3h5v11H0V3h5z" fill="#62d61f" />
                        <path d="M2 6.500h4M2 9.500h11M8 6.500h5M4 11.500h7M7.500 1v3" stroke="#0c3d04" strokeWidth="1.200" />
                    </svg>
                }
            >
                [Na_ta_sh__ka] - Окн...
            </TaskButton>
            <TaskButton active icon={ <GrafLogo /> }>Maingraf</TaskButton>
            <TaskButton
                icon={
                    <svg className="w-[15px] h-4 shrink-0" viewBox="0 0 15 16">
                        <path d="M4 0h8l3 3v13H4z" fill="#f2f6ff" stroke="#7f9cd0" />
                        <path d="M0 2h10v9H0z" fill="#3467bd" />
                        <path d="M2 4l1.500 5L5 5l1.500 4L8 4" fill="none" stroke="#fff" strokeWidth="1.300" />
                        <path d="M6 13h7M11 7h2M11 10h2" stroke="#7f9cd0" />
                    </svg>
                }
            >
                Лабораторная работ...
            </TaskButton>
            <div className="ml-auto flex shrink-0 items-center pr-[13px]">
                <button className="mr-[17px] h-4 w-4 bg-[#03689f] leading-4">EN</button>
                <button aria-label="Показать значки">
                    <svg className="w-[7px] h-[9px] mr-2" viewBox="0 0 7 9" fill="none" stroke="#fff" strokeWidth="2"><path d="M6 1L2 4.500 6 8" /></svg>
                </button>
                <svg className="w-[15px] h-[15px] mr-[3px]" viewBox="0 0 15 15">
                    <path d="M0 8h15v4l-4 3H4l-4-3z" fill="#53c520" />
                    <path d="M3 7l4.500-6L12 7z" fill="#e02b20" />
                    <path d="M4 8h7v5H4z" fill="#f6f6f6" />
                    <path d="M5 9h2v3H5zM8 9h2v3H8zM1 10h2v2H1zM12 10h2v2h-2z" fill="#333" />
                </svg>
                <svg className="w-4 h-4 mr-[7px]" viewBox="0 0 16 16" fill="#0a2da8" stroke="#a5c9ff">
                    <path d="M5.500 1.500h10v7h-10z" />
                    <path d="M.5 5.500h10v7H.5z" />
                    <path d="M3 14.500h6" />
                </svg>
                <time>20:43</time>
            </div>
        </footer>
    );
}

export default function App() {
    return (
        <div className="relative flex h-screen flex-col overflow-hidden bg-[#9ab8e0] font-['Open_Sans','Noto_Sans',sans-serif]">
            <TitleBar />
            <TabBar />
            <div className="flex h-[89px] shrink-0 gap-[3px] overflow-hidden rounded-[3px] border border-[#8db2e3] bg-linear-to-b from-[#dbe6f4] via-[#c9dcf2] to-[#e2fbff] pt-[1px] pr-1 pb-[1px] pl-[3px]">
                <ClipboardGroup />
                <FontGroup />
                <ParagraphGroup />
                <StylesGroup />
                <EditingGroup />
            </div>
            <div className="h-1 shrink-0 bg-[#86a5d2]"></div>
            <HorizontalRuler />
            <DocumentArea />
            <StatusBar />
            <Taskbar />
            <button aria-label="Кнопка Office" className="absolute top-[3px] left-[3px]"><OfficeLogo /></button>
            <GrafWindow />
        </div>
    );
}
